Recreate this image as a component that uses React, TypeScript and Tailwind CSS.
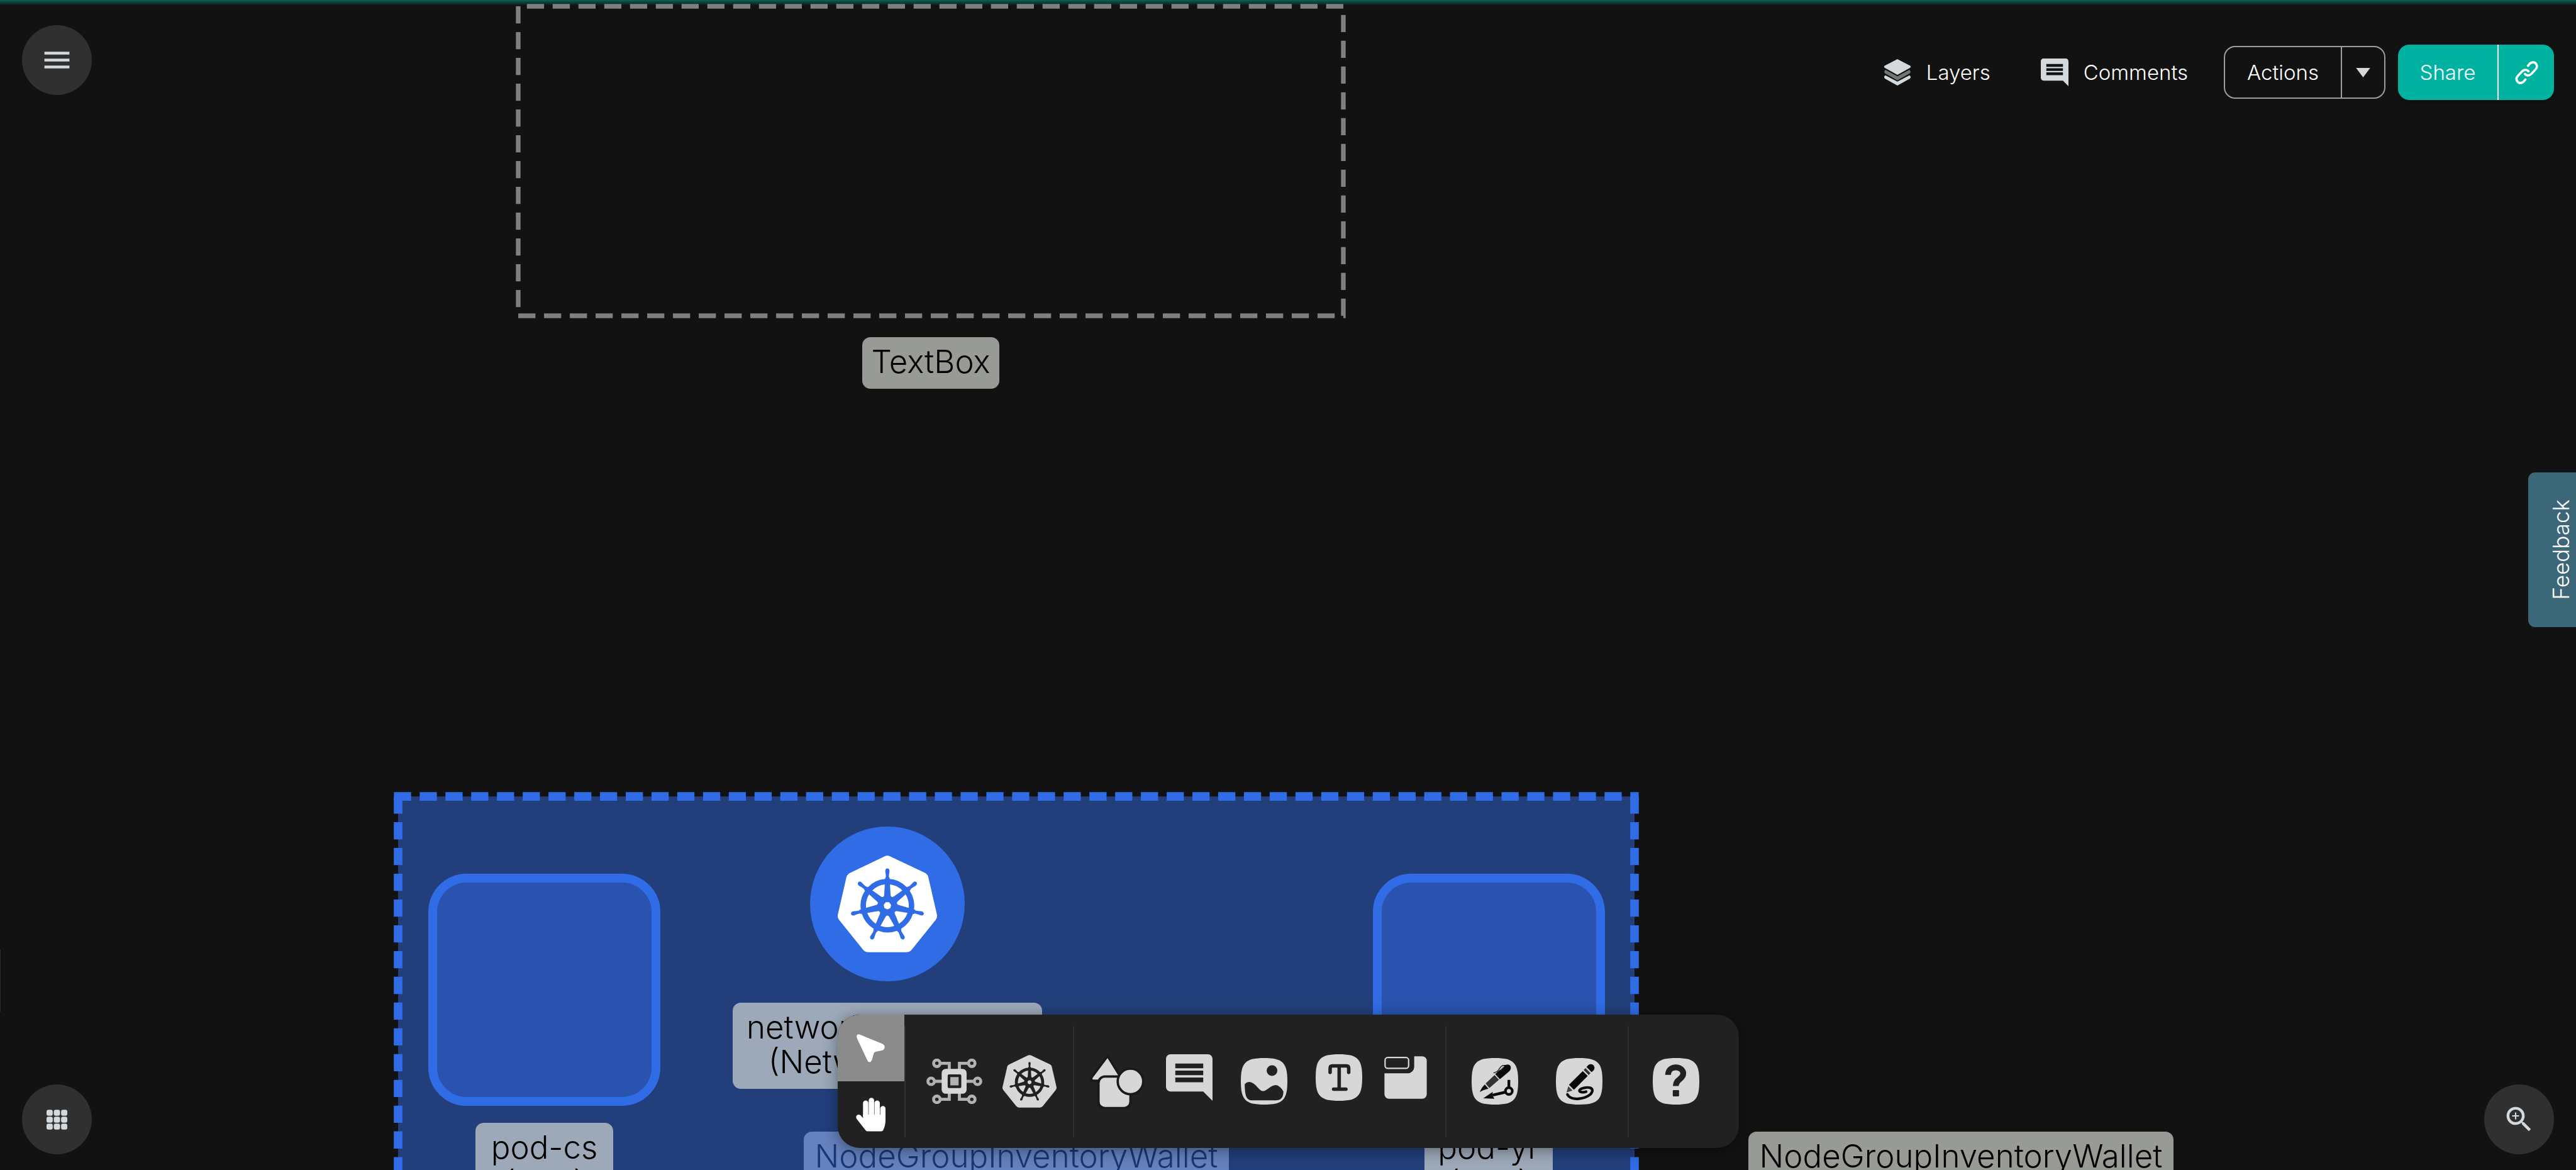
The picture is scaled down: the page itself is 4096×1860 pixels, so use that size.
import type { ReactNode } from "react";
import { MdComment, MdMenu, MdZoomIn } from "react-icons/md";
import { SiKubernetes } from "react-icons/si";

const SQUIRCLE =
  "M50 0C90 0 100 10 100 50S90 100 50 100 0 90 0 50 10 0 50 0Z";

function LayersIcon() {
  return (
    <svg viewBox="0 0 60 57" className="h-[42px] w-11 text-[#d3d9dc]" fill="currentColor" aria-hidden="true">
      <path d="M30 0L57 14Q60.500 16.500 57 19L30 34L3 19Q-0.500 16.500 3 14Z" />
      <path fill="#737575" d="M4 23L30 37L56 23Q60 27 57 30.500L30 46L3 30.500Q0 27 4 23Z" />
      <path d="M4 35L30 48.500L56 35Q61 38 57 42L30 57L3 42Q-1 38 4 35Z" />
    </svg>
  );
}

function ChainIcon() {
  return (
    <svg viewBox="128 104 152 152" className="size-[37px]" fill="none" stroke="currentColor" strokeWidth="15" strokeLinecap="round" aria-hidden="true">
      <path d="M213 135L222 124C235 109 257 109 265 122C273 133 273 147 263 158L236 187C222 201 202 201 193 189" />
      <path d="M196 225L187 236C174 251 152 251 144 238C136 227 136 213 146 202L173 173C187 159 207 159 216 171" />
    </svg>
  );
}

function GridIcon() {
  const cells = [0, 1, 2];
  return (
    <svg viewBox="0 0 45 43" className="h-8 w-[33px] text-[#d3d9dc]" fill="currentColor" aria-hidden="true">
      {cells.map((r) =>
        cells.map((c) => (
          <rect key={`${r}-${c}`} x={c * 15.8} y={r * 15} width="13.4" height="13" rx="4" />
        ))
      )}
    </svg>
  );
}

function CursorIcon() {
  return (
    <svg viewBox="0 0 61 61" className="size-[45px] text-white" fill="currentColor" aria-hidden="true">
      <path d="M7 1L56 21Q61 24 60.500 29Q60 33.500 56 35L41 38Q38 39 37 42L33 56Q31 60 28 60.300Q24.500 60 23 56L1 9Q-1 4 1.500 1.500Q4 -0.500 7 1Z" />
    </svg>
  );
}

function HandIcon() {
  return (
    <svg viewBox="0 0 64 73" className="h-[54px] w-[47px] text-white" fill="currentColor" aria-hidden="true">
      <path d="M15.300 40V11.500a5.700 5.700 0 0 1 11.500 0V40Z" />
      <path d="M27.600 40V6a5.900 5.900 0 0 1 11.800 0V40Z" />
      <path d="M40.200 40V11.500a5.700 5.700 0 0 1 11.500 0V40Z" />
      <path d="M52.600 40V23.500a5.700 5.700 0 0 1 11.400 0V40Z" />
      <path d="M15.300 37H64V48Q64 60 59 70Q58 72.500 55 72.500H25Q22 72.500 20.500 70L1 45Q-1 38 5 36.500Q8 36 10 38L15.300 44Z" />
    </svg>
  );
}

function CircuitIcon() {
  return (
    <svg viewBox="0 0 121 98" className="h-[72px] w-[89px]" fill="none" aria-hidden="true">
      <g stroke="#b1b1b1" strokeWidth="6.500">
        <circle cx="22.600" cy="10" r="7" />
        <circle cx="98.200" cy="10" r="7" />
        <circle cx="10.200" cy="49" r="7" />
        <circle cx="110.700" cy="49" r="7" />
        <circle cx="22.600" cy="88" r="7" />
        <circle cx="98.200" cy="88" r="7" />
        <path d="M30 10H49.500V23M91 10H71.400V23M18 49H34M103 49H86M30 88H49.500V75M91 88H71.400V75" />
      </g>
      <rect x="33" y="22" width="54" height="54" rx="9" fill="#d7d7d7" />
      <rect x="46" y="34" width="29.500" height="29.500" rx="3" fill="#212121" />
      <rect x="51.700" y="39.800" width="18" height="18" fill="#b1b1b1" />
    </svg>
  );
}

function ShapesIcon() {
  return (
    <svg viewBox="0 0 115 118" className="h-[87px] w-[85px]" fill="#d7d7d7" stroke="#191919" strokeWidth="5" aria-hidden="true">
      <path d="M35 6Q36.500 3 38 6L64 48Q67 54.500 61 57H6Q0 56 2 50Z" />
      <rect x="17" y="48" width="69" height="68" rx="14" />
      <circle cx="86" cy="58.700" r="27.500" />
    </svg>
  );
}

function CommentIcon({ className }: { className: string }) {
  return <MdComment className={className} viewBox="2 2 20 20" aria-hidden="true" />;
}

function ImageIcon() {
  return (
    <svg viewBox="0 0 100 100" className="size-[74px]" aria-hidden="true">
      <path d={SQUIRCLE} fill="#d7d7d7" />
      <circle cx="67" cy="27" r="11.500" fill="#212121" />
      <path
        fill="#212121"
        d="M8.300 56Q16 48 26 54C36 60 40 71 48 71C56 71 64 58 75 58C82 58 90 68 91.500 72C91 84 88 91 73 91H27C13 91 9 86 8.300 56Z"
      />
    </svg>
  );
}

function TextToolIcon() {
  return (
    <svg viewBox="0 0 100 100" className="size-[74px]" fill="none" strokeLinecap="round" aria-hidden="true">
      <path d={SQUIRCLE} fill="#d7d7d7" />
      <path stroke="#212121" strokeWidth="7.500" d="M31 39V30Q31 25 36 25H66Q71 25 71 30V39M50.500 25V74M38.500 75H65" />
    </svg>
  );
}

function SectionIcon() {
  return (
    <svg viewBox="52 42 275 276" className="size-[68px]" fill="none" aria-hidden="true">
      <path fill="#d7d7d7" d="M245 43h52a29 29 0 0 1 29 29v216a29 29 0 0 1-29 29H82a29 29 0 0 1-29-29V153H203a42 42 0 0 0 42-42z" />
      <rect x="57" y="51" width="152" height="70" rx="17" stroke="#d7d7d7" strokeWidth="9" />
    </svg>
  );
}

function PenIcon() {
  return (
    <svg viewBox="615 57 300 300" className="size-[74px]" fill="none" aria-hidden="true">
      <path fill="#d7d7d7" d="M765 57C885 57 915 87 915 207S885 357 765 357 615 327 615 207 645 57 765 57Z" />
      <path fill="#0a0a0a" d="M767 160L824 108Q850 90 864 107Q873 126 858 142L797 194Z" />
      <path stroke="#0a0a0a" strokeWidth="5" d="M756 153C775 149 783 144 790 131C800 114 808 105 820 104L838 104" />
      <path stroke="#d7d7d7" strokeWidth="4" d="M800 134L824 110" />
      <path fill="#333333" d="M763 166L791 197L729 251L705 221Z" />
      <path fill="#0a0a0a" d="M700 227L723 255Q690 262 667 276Q680 245 700 227Z" />
      <circle cx="855" cy="270" r="22" stroke="#0a0a0a" strokeWidth="17" />
      <path stroke="#0a0a0a" strokeWidth="18" d="M855 198V246M832 277L748 297" />
      <path fill="#0a0a0a" d="M690 316L751 275L748 297L762 319Z" />
    </svg>
  );
}

function PencilIcon() {
  return (
    <svg viewBox="1161 54 300 300" className="size-[74px]" fill="none" aria-hidden="true">
      <path fill="#d7d7d7" d="M1311 54C1431 54 1461 84 1461 204S1431 354 1311 354 1161 324 1161 204 1191 54 1311 54Z" />
      <path fill="#0a0a0a" d="M1334 138L1366 170L1277 259L1245 226Z" />
      <path fill="#333333" d="M1340 131L1352 119L1384 151L1372 163Z" />
      <path fill="#0a0a0a" d="M1358 112L1370 100Q1386 88 1402 100Q1416 115 1405 132L1391 145Z" />
      <path fill="#444444" d="M1241 235L1268 264L1229 276Z" />
      <path
        stroke="#0a0a0a"
        strokeWidth="17"
        strokeLinecap="round"
        d="M1235 289C1245 310 1275 320 1310 316C1355 312 1392 290 1396 265C1397 245 1370 240 1345 246C1320 250 1306 262 1316 270C1328 276 1345 275 1356 271"
      />
    </svg>
  );
}

function HelpIcon() {
  return (
    <svg viewBox="0 0 100 100" className="size-[74px]" fill="none" aria-hidden="true">
      <path d={SQUIRCLE} fill="#d7d7d7" />
      <path stroke="#212121" strokeWidth="12.500" d="M33 36C33 27 39 20 49.500 20C59 20 65.500 26 65.500 33C65.500 46 49.500 45 49.500 60" />
      <rect x="43" y="69" width="13.500" height="13.500" rx="1.500" fill="#212121" />
    </svg>
  );
}

function NodeLabel({ className, children }: { className: string; children: ReactNode }) {
  return (
    <div className={`absolute rounded-[13px] pt-[11px] pb-4 text-center text-[51px] leading-[55px] whitespace-nowrap ${className}`}>
      {children}
    </div>
  );
}

function Canvas() {
  return (
    <main className="absolute inset-0 overflow-hidden text-black">
      <svg viewBox="0 0 1779 667" className="absolute top-[10px] left-[824px] h-[492px] w-[1312px] overflow-visible" fill="none" stroke="#808080" strokeWidth="10" strokeDasharray="37 18.590" aria-hidden="true">
        <path d="M0 0V667H1779V0H0" />
      </svg>
      <NodeLabel className="top-[536px] left-[1371px] w-[218px] bg-[#989a96]">TextBox</NodeLabel>

      <svg viewBox="0 0 2666 999" className="absolute top-[1266px] left-[633px] h-[737px] w-[1966px] overflow-visible" fill="none" stroke="#306ce5" strokeWidth="18.500" strokeDasharray="37 18.540" aria-hidden="true">
        <rect width="2666" height="999" fill="#223f7c" stroke="none" />
        <path d="M0 0V999" />
        <path d="M2666 0V999" />
        <path d="M-9 0H2675" />
      </svg>

      <div className="absolute top-[1389px] left-[681px] size-[369px] rounded-[61px] border-[14px] border-[#306ce5] bg-[#2953af]" />
      <NodeLabel className="top-[1785px] left-[756px] w-[219px] bg-[#9da9b9]">
        pod-cs
        <br />
        (Pod)
      </NodeLabel>

      <div className="absolute top-[1314px] left-[1288px] flex size-[246px] items-center justify-center rounded-full bg-[#306ce5]">
        <SiKubernetes className="size-[158px] text-white" aria-hidden="true" />
      </div>
      <NodeLabel className="top-[1594px] left-[1165px] w-[492px] bg-[#9da9b9]">
        network-policy-mc
        <br />
        (NetworkPolicy)
      </NodeLabel>

      <NodeLabel className="top-[1799px] left-[1278px] w-[676px] bg-[#6582be] text-[#1a3675]">
        NodeGroupInventoryWallet
      </NodeLabel>

      <div className="absolute top-[1389px] left-[2183px] size-[369px] rounded-[61px] border-[14px] border-[#306ce5] bg-[#2953af]" />
      <NodeLabel className="top-[1785px] left-[2265px] w-[204px] bg-[#9da9b9]">
        pod-yr
        <br />
        (Pod)
      </NodeLabel>

      <NodeLabel className="top-[1799px] left-[2780px] w-[676px] bg-[#989a96]">
        NodeGroupInventoryWallet
      </NodeLabel>
    </main>
  );
}

const ROUND = "flex size-[111px] items-center justify-center rounded-full bg-[#303030] text-[#d3d9dc]";

function Header() {
  return (
    <header className="relative flex items-start justify-between px-[35px] pt-10 text-[33px] leading-[44px] text-white">
      <button type="button" aria-label="Menu" className={ROUND}>
        <MdMenu className="size-[53px]" aria-hidden="true" />
      </button>
      <div className="mt-[31px] flex h-[88px] items-center">
        <button type="button" className="mr-20 flex items-center gap-6">
          <LayersIcon />
          Layers
        </button>
        <button type="button" className="mr-[57px] flex items-center gap-6">
          <CommentIcon className="size-11 text-[#d3d9dc]" />
          Comments
        </button>
        <div className="mr-5 flex h-[84px] w-[257px] overflow-hidden rounded-[18px] border-2 border-[#9e9e9e]">
          <button type="button" className="flex-1 border-r-2 border-[#9e9e9e]">
            Actions
          </button>
          <button type="button" aria-label="More actions" className="flex w-[67px] items-center justify-center">
            <svg viewBox="0 0 30 20" className="h-[15px] w-[23px] text-[#d3d9dc]" fill="currentColor" aria-hidden="true">
              <path d="M0 0H30L15 20Z" />
            </svg>
          </button>
        </div>
        <div className="flex h-[88px] w-[248px] overflow-hidden rounded-[18px] bg-[#00b3a0] shadow-lg">
          <button type="button" className="flex-1 border-r-2 border-white">
            Share
          </button>
          <button type="button" aria-label="Copy link" className="flex w-[88px] items-center justify-center">
            <ChainIcon />
          </button>
        </div>
      </div>
    </header>
  );
}

function Divider() {
  return <div className="h-[177px] w-0.5 bg-[#303030]" />;
}

function Tool({ label, className = "", children }: { label: string; className?: string; children: ReactNode }) {
  return (
    <button type="button" aria-label={label} className={`flex items-center justify-center ${className}`}>
      {children}
    </button>
  );
}

function Toolbar() {
  return (
    <div role="toolbar" aria-label="Design tools" className="mb-[10px] flex h-[212px] w-[1433px] items-center overflow-hidden rounded-[35px] bg-[#212121] shadow-[0_4px_24px_rgba(0,0,0,0.4)]">
      <div className="flex h-full w-[106px] flex-col">
        <Tool label="Select" className="flex-1 bg-[#8b8b8b]">
          <CursorIcon />
        </Tool>
        <Tool label="Pan" className="flex-1">
          <HandIcon />
        </Tool>
      </div>
      <Divider />
      <div className="flex w-[266px] items-center gap-8 pl-[33px]">
        <Tool label="Components">
          <CircuitIcon />
        </Tool>
        <Tool label="Kubernetes">
          <SiKubernetes className="size-[86px] text-[#d7d7d7]" aria-hidden="true" />
        </Tool>
      </div>
      <Divider />
      <div className="flex flex-1 items-center gap-[35px] pl-[26px]">
        <Tool label="Shapes">
          <ShapesIcon />
        </Tool>
        <div className="flex items-center gap-[45px]">
          <Tool label="Comment" className="pb-3">
            <CommentIcon className="size-[74px] text-[#d7d7d7]" />
          </Tool>
          <Tool label="Image">
            <ImageIcon />
          </Tool>
          <Tool label="Text" className="pb-3">
            <TextToolIcon />
          </Tool>
        </div>
        <Tool label="Section" className="pb-3">
          <SectionIcon />
        </Tool>
      </div>
      <Divider />
      <div className="flex w-[288px] items-center justify-center gap-[60px]">
        <Tool label="Pen">
          <PenIcon />
        </Tool>
        <Tool label="Pencil">
          <PencilIcon />
        </Tool>
      </div>
      <Divider />
      <div className="flex w-[175px] pl-[38px]">
        <Tool label="Help">
          <HelpIcon />
        </Tool>
      </div>
    </div>
  );
}

export default function App() {
  return (
    <div className="relative flex h-screen w-full flex-col justify-between overflow-hidden bg-[#121212] font-['Inter','Open_Sans',sans-serif] font-light">
      <Canvas />
      <div className="absolute inset-x-0 top-0 h-[9px] bg-linear-to-b from-[#00b39f]/50 to-transparent" />
      <div className="absolute top-[1510px] left-0 h-[99px] w-px bg-[#262f33]" />
      <Header />
      <button type="button" className="absolute top-[751px] right-0 flex h-[246px] w-[76px] items-center justify-center rounded-l-[11px] bg-[#3c6779] pl-7 text-[35px] leading-[44px] text-white">
        <span className="rotate-180 [writing-mode:vertical-rl]">Feedback</span>
      </button>
      <footer className="relative flex items-end justify-between px-[35px] pb-[25px]">
        <button type="button" aria-label="Apps" className={ROUND}>
          <GridIcon />
        </button>
        <Toolbar />
        <button type="button" aria-label="Zoom in" className={ROUND}>
          <MdZoomIn className="size-[53px]" aria-hidden="true" />
        </button>
      </footer>
    </div>
  );
}
